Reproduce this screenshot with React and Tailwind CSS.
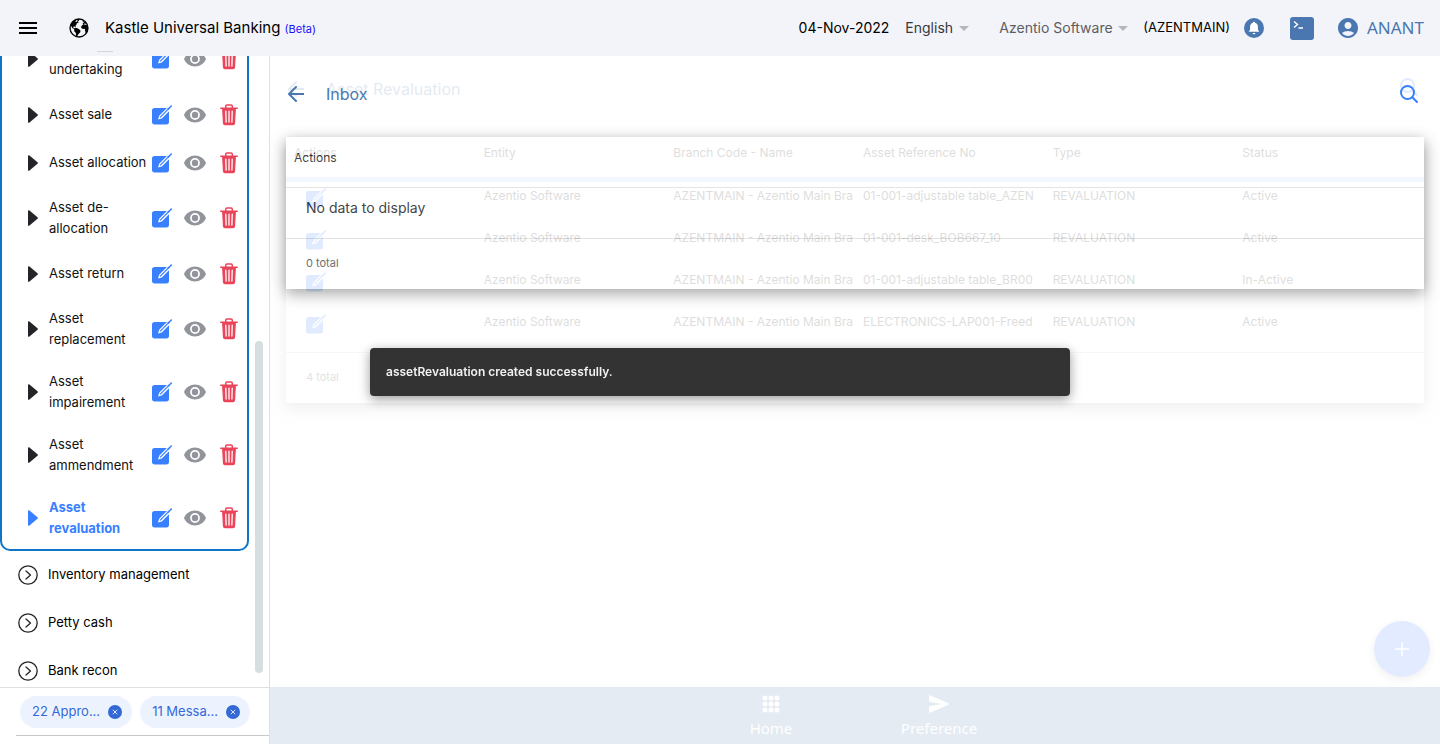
import React from "react";
import { IoEarth } from "react-icons/io5";
import { MdAccountCircle } from "react-icons/md";

const menu = [
  { label: "Asset undertaking" },
  { label: "Asset sale" },
  { label: "Asset allocation" },
  { label: "Asset de-allocation" },
  { label: "Asset return" },
  { label: "Asset replacement" },
  { label: "Asset impairement" },
  { label: "Asset ammendment" },
  { label: "Asset revaluation", active: true },
];

const modules = ["Inventory management", "Petty cash", "Bank recon"];

const columns = ["Actions", "Entity", "Branch Code - Name", "Asset Reference No", "Type", "Status"];

const rows = [
  ["01-001-adjustable table_AZEN", "Active"],
  ["01-001-desk_BOB667_10", "Active"],
  ["01-001-adjustable table_BR00", "In-Active"],
  ["ELECTRONICS-LAP001-Freed", "Active"],
];

function EditIcon() {
  return (
    <svg viewBox="0 0 20 20" className="size-5 shrink-0" aria-hidden="true">
      <path
        fill="currentColor"
        d="M15.600 3H2.600A2.600 2.600 0 0 0 0 5.600v11.200A2.600 2.600 0 0 0 2.600 19.400h11.800A2.600 2.600 0 0 0 17 16.800V6.200L9.800 13.400 6 14.600l1.200-3.900L14.900 3z"
      />
      <path d="M8.100 12.400 16.400 3.900" fill="none" stroke="currentColor" strokeWidth="1.300" />
      <path d="m16.200 4.100 1.500-1.500M18.700 1.600 19.300 1" stroke="currentColor" strokeWidth="1.600" strokeLinecap="round" />
    </svg>
  );
}

function EyeIcon() {
  return (
    <svg viewBox="0 0 22 16" className="h-4 w-[22px]" aria-hidden="true">
      <path fill="currentColor" fillRule="evenodd" d="M11 .5C6.200.5 2 3.300 0 8c2 4.700 6.200 7.500 11 7.500S20 12.700 22 8C20 3.300 15.800.5 11 .5zm0 2.600a4.900 4.900 0 1 1 0 9.800 4.900 4.900 0 0 1 0-9.800z" />
      <circle cx="11" cy="8" r="3.200" fill="currentColor" />
    </svg>
  );
}

function TrashIcon() {
  return (
    <svg viewBox="0 0 18 22" className="h-[22px] w-[18px]" fill="none" stroke="currentColor" aria-hidden="true">
      <path d="M.8 4.300h16.400" strokeWidth="1.600" strokeLinecap="round" />
      <path d="M5.700 4V2.300C5.700 1.500 6.200 1 7 1h4c.8 0 1.300.5 1.300 1.300V4" strokeWidth="1.500" />
      <path d="m2.700 4.500.8 14.600c.1 1 .6 1.500 1.500 1.500h8c.9 0 1.400-.5 1.500-1.500l.8-14.600z" fill="currentColor" strokeWidth="1.200" />
      <path d="m5.800 7.200.3 10.800M9 7.200V18m3.200-10.800L11.900 18" stroke="#fff" strokeWidth="1.300" strokeLinecap="round" />
    </svg>
  );
}

function BackIcon() {
  return (
    <svg viewBox="0 0 16 16" className="size-4" fill="none" stroke="currentColor" strokeWidth="2" strokeLinecap="round" strokeLinejoin="round" aria-hidden="true">
      <path d="M8 1 1 8l7 7M1.500 8H15.500" />
    </svg>
  );
}

function SearchIcon() {
  return (
    <svg viewBox="0 0 18 18" className="size-[18px]" fill="none" stroke="currentColor" strokeWidth="2" strokeLinecap="round" aria-hidden="true">
      <circle cx="7.500" cy="7.500" r="6.500" />
      <path d="m12.300 12.300 4.700 4.700" />
    </svg>
  );
}

function Caret() {
  return (
    <svg viewBox="0 0 10 5" className="pointer-events-none h-[5px] w-2.5 text-[#b5b7ba]" aria-hidden="true">
      <path d="M0 0h10L5 5z" fill="currentColor" />
    </svg>
  );
}

function TopBar() {
  return (
    <header className="relative flex h-14 shrink-0 items-center bg-[#f3f4f9] px-4">
      <button type="button" aria-label="Menu" className="flex size-6 items-center justify-center text-black">
        <svg viewBox="0 0 18 12" className="h-3 w-[18px]" aria-hidden="true">
          <path d="M0 0h18v2H0zM0 5h18v2H0zM0 10h18v2H0z" fill="currentColor" />
        </svg>
      </button>
      <IoEarth className="ml-7 size-[22px] text-black" />
      <h1 className="ml-[15px] text-[15px] text-black">
        Kastle Universal Banking <span className="text-[11px] text-[#1a0dff]">(Beta)</span>
      </h1>
      <div className="absolute bottom-1 left-[97px] h-px w-4 bg-[#d5d6da]" />
      <div className="ml-auto flex items-center text-black">
        <span className="text-sm">04-Nov-2022</span>
        <label className="ml-4 flex items-center gap-1 text-sm text-[#37383b]">
          <select aria-label="Language" className="w-[50px] appearance-none bg-transparent">
            <option>English</option>
          </select>
          <Caret />
        </label>
        <label className="ml-[30px] flex items-center gap-1 text-sm text-[#5b5d62]">
          <select aria-label="Entity" className="w-[115px] appearance-none bg-transparent">
            <option>Azentio Software</option>
          </select>
          <Caret />
        </label>
        <span className="ml-[15px] text-[13px]">(AZENTMAIN)</span>
        <button type="button" aria-label="Notifications" className="ml-3.5 text-[#4a77b0]">
          <svg viewBox="0 0 20 20" className="size-5" aria-hidden="true">
            <circle cx="10" cy="10" r="10" fill="currentColor" />
            <path d="M10 3.800c.6 0 1 .4 1 1 1.800.5 2.900 2 2.900 3.900v3l1.200 1.500v.6H4.900v-.6l1.200-1.500v-3c0-1.900 1.100-3.400 2.900-3.900 0-.6.4-1 1-1zM8.600 14.900h2.800a1.400 1.400 0 0 1-2.800 0z" fill="#fff" />
          </svg>
        </button>
        <button type="button" aria-label="Console" className="ml-[26px] text-[#4a77b0]">
          <svg viewBox="0 0 24 23" className="h-[23px] w-6" aria-hidden="true">
            <rect width="24" height="23" rx="3" fill="currentColor" />
            <path d="m4 4.500 3.500 3L4 10.500M8.500 11h4.500" fill="none" stroke="#fff" strokeWidth="1.400" />
          </svg>
        </button>
        <button type="button" className="ml-[22px] flex items-center gap-[7px] font-['Noto_Sans',sans-serif] text-[17px] text-[#4a77b0]">
          <MdAccountCircle className="size-6" />
          ANANT
        </button>
      </div>
    </header>
  );
}

function MenuItem({ label, active }) {
  return (
    <li className="flex min-h-12 items-center pt-[11px] pb-2.5 pl-[26px]">
      <svg viewBox="0 0 10 16" className={active ? "h-4 w-2.5 text-[#3880ff]" : "h-4 w-2.5 text-[#222428]"} aria-hidden="true">
        <path d="M0 .8Q.4-.3 1.500.6L9.500 7.200q.8.8 0 1.600L1.500 15.400Q.4 16.300 0 15.200z" fill="currentColor" />
      </svg>
      <a
        href="#"
        className={
          active
            ? "ml-[11px] w-[101px] shrink-0 text-[13px] leading-[21px] font-bold text-[#3880ff]"
            : "ml-[11px] w-[101px] shrink-0 text-[13px] leading-[21px] text-[#111]"
        }
      >
        {label}
      </a>
      <button type="button" aria-label={"Edit " + label} className="ml-0.5 text-[#3880ff]"><EditIcon /></button>
      <button type="button" aria-label={"View " + label} className="ml-3 text-[#92949c]"><EyeIcon /></button>
      <button type="button" aria-label={"Delete " + label} className="ml-3.5 text-[#eb445a]"><TrashIcon /></button>
    </li>
  );
}

function Chip({ children }) {
  return (
    <button type="button" className="flex h-8 items-center gap-2 rounded-full bg-[#ecf3ff] pr-2.5 pl-3 text-[13px] text-[#3369d6]">
      {children}
      <svg viewBox="0 0 14 14" className="size-3.5" aria-hidden="true">
        <circle cx="7" cy="7" r="7" fill="currentColor" />
        <path d="m4.800 4.800 4.400 4.400m0-4.400-4.400 4.400" stroke="#dce8ff" />
      </svg>
    </button>
  );
}

function Sidebar() {
  return (
    <aside className="flex w-[270px] shrink-0 flex-col border-r border-[#dedfe0]">
      <div className="flex min-h-0 flex-1 overflow-hidden">
        <nav className="-mb-2 flex w-[249px] flex-col justify-end">
          <ul className="shrink-0 rounded-b-[10px] border-2 border-t-0 border-[#0f75c9]">
            {menu.map((m) => (
              <MenuItem key={m.label} {...m} />
            ))}
          </ul>
          <ul className="shrink-0">
            {modules.map((m) => (
              <li key={m}>
                <a href="#" className="flex h-12 items-center gap-2.5 pl-[18px] text-[13px] text-black">
                  <svg viewBox="0 0 20 20" className="size-5" fill="none" stroke="#222428" strokeWidth="1.300" strokeLinecap="round" strokeLinejoin="round" aria-hidden="true">
                    <circle cx="10" cy="10" r="9.200" />
                    <path d="m8 6 4.500 4L8 14" />
                  </svg>
                  {m}
                </a>
              </li>
            ))}
          </ul>
        </nav>
        <div className="mb-3.5 ml-1.5 h-[332px] w-2 self-end rounded-full bg-[#d7dee1]" />
      </div>
      <div className="h-[57px] border-t border-[#dedfe0] pl-4">
        <div className="flex h-12 items-center gap-2 border-b border-[#c8c7cc] pt-px pl-1">
          <Chip>22 Appro...</Chip>
          <Chip>11 Messa...</Chip>
        </div>
      </div>
    </aside>
  );
}

function LeavingPage() {
  return (
    <section className="flex flex-col px-4 opacity-15 [grid-area:1/1]">
      <div className="flex h-[81px] items-start justify-between pt-[22px]">
        <div className="flex items-center gap-[22px] text-[#4a77b0]">
          <button type="button" aria-label="Close asset revaluation" className="ml-0.5"><BackIcon /></button>
          <h2 className="text-base leading-[22px]">Asset Revaluation</h2>
        </div>
        <button type="button" aria-label="Search assets" className="mr-1.5 text-[#3880ff]"><SearchIcon /></button>
      </div>
      <div className="bg-white shadow-[0_5px_14px_rgba(0,0,0,0.4)]">
        <table className="w-full table-fixed border-separate border-spacing-0 text-left text-xs text-[#222]">
          <thead>
            <tr className="h-[45px] align-top">
              {columns.map((c) => (
                <th key={c} className="border-b-[5px] border-[#b5d6ff] pt-2 pl-2 font-normal">{c}</th>
              ))}
            </tr>
          </thead>
          <tbody>
            {rows.map(([ref, status]) => (
              <tr key={ref} className="h-[42px] align-top whitespace-nowrap text-[#222]">
                <td className="pt-1.5 pl-5 text-[#3880ff]">
                  <button type="button" aria-label={"Open " + ref} className="block"><EditIcon /></button>
                </td>
                {["Azentio Software", "AZENTMAIN - Azentio Main Bra", ref, "REVALUATION", status].map((v) => (
                  <td key={v} className="pt-1.5 pl-2"><div className="overflow-hidden">{v}</div></td>
                ))}
              </tr>
            ))}
          </tbody>
        </table>
        <p className="mt-0.5 h-[51px] border-t border-[#ccc] pt-4 pl-5 text-[11px] text-[#444]">4 total</p>
      </div>
    </section>
  );
}

function InboxPage() {
  return (
    <section className="flex flex-col px-4 [grid-area:1/1]">
      <div className="mb-1.5 flex h-[75px] items-center justify-between">
        <div className="flex items-center gap-[22px] text-[#4a77b0]">
          <button type="button" aria-label="Back" className="ml-0.5"><BackIcon /></button>
          <h2 className="text-base leading-[22px]">Inbox</h2>
        </div>
        <button type="button" aria-label="Search" className="mr-1.5 text-[#3880ff]"><SearchIcon /></button>
      </div>
      <div className="shadow-[0_5px_14px_rgba(0,0,0,0.4)]">
        <table className="w-full border-separate border-spacing-0 text-left">
          <thead>
            <tr className="h-[51px]">
              <th className="border-b border-[#e0e0e0] px-2 pb-2 text-xs font-normal text-[#222]">Actions</th>
            </tr>
          </thead>
          <tbody>
            <tr className="h-[51px]">
              <td className="border-b border-[#dedede] px-5 pb-2.5 text-sm text-[#222428]">No data to display</td>
            </tr>
          </tbody>
        </table>
        <p className="h-[50px] pt-4 pl-5 text-[11px] text-[#555]">0 total</p>
      </div>
    </section>
  );
}

function Toast() {
  return (
    <div role="status" className="fixed inset-x-0 top-[348px] mx-auto flex h-12 w-[700px] max-w-full items-center rounded bg-[#333] px-4 text-xs font-semibold text-[#f1f1f1] shadow-[0_3px_12px_rgba(0,0,0,0.4)]">
      assetRevaluation created successfully.
    </div>
  );
}

export default function App() {
  return (
    <div className="flex h-screen flex-col overflow-hidden bg-white font-['Inter',sans-serif]">
      <TopBar />
      <div className="flex min-h-0 flex-1">
        <Sidebar />
        <div className="relative flex min-w-0 flex-1 flex-col">
          <main className="grid flex-1 content-start">
            <LeavingPage />
            <InboxPage />
          </main>
          <button type="button" aria-label="Add" className="absolute right-2.5 bottom-[67px] flex size-14 items-center justify-center rounded-full bg-[#e2ebff] text-white shadow-[0_3px_10px_rgba(0,0,0,0.06)]">
            <svg viewBox="0 0 14 14" className="size-3.5" aria-hidden="true">
              <path d="M7 0v14M0 7h14" stroke="currentColor" strokeWidth="1.500" />
            </svg>
          </button>
          <nav className="flex h-[57px] shrink-0 justify-center gap-[18px] bg-[#e4ebf3] font-['Noto_Sans',sans-serif] text-white">
            <a href="#" className="flex w-[150px] flex-col items-center pt-2">
              <svg viewBox="0 0 18 18" className="size-[18px]" fill="currentColor" aria-hidden="true">
                {[3, 9, 15].map((y) => [3, 9, 15].map((x) => <circle key={x + "-" + y} cx={x} cy={y} r="2.500" />))}
              </svg>
              <span className="mt-[3px] text-[15px] leading-6">Home</span>
            </a>
            <a href="#" className="flex w-[150px] flex-col items-center pt-2">
              <svg viewBox="0 0 20 18" className="h-[18px] w-5" fill="currentColor" aria-hidden="true">
                <path d="M0 1.200Q.2-.2 1.500.5L19.400 8.200q1 .8 0 1.600L1.500 17.500Q.2 18.200 0 16.800v-5.500L12 9 0 6.700z" />
              </svg>
              <span className="mt-[3px] text-[15px] leading-6">Preference</span>
            </a>
          </nav>
        </div>
      </div>
      <Toast />
    </div>
  );
}
